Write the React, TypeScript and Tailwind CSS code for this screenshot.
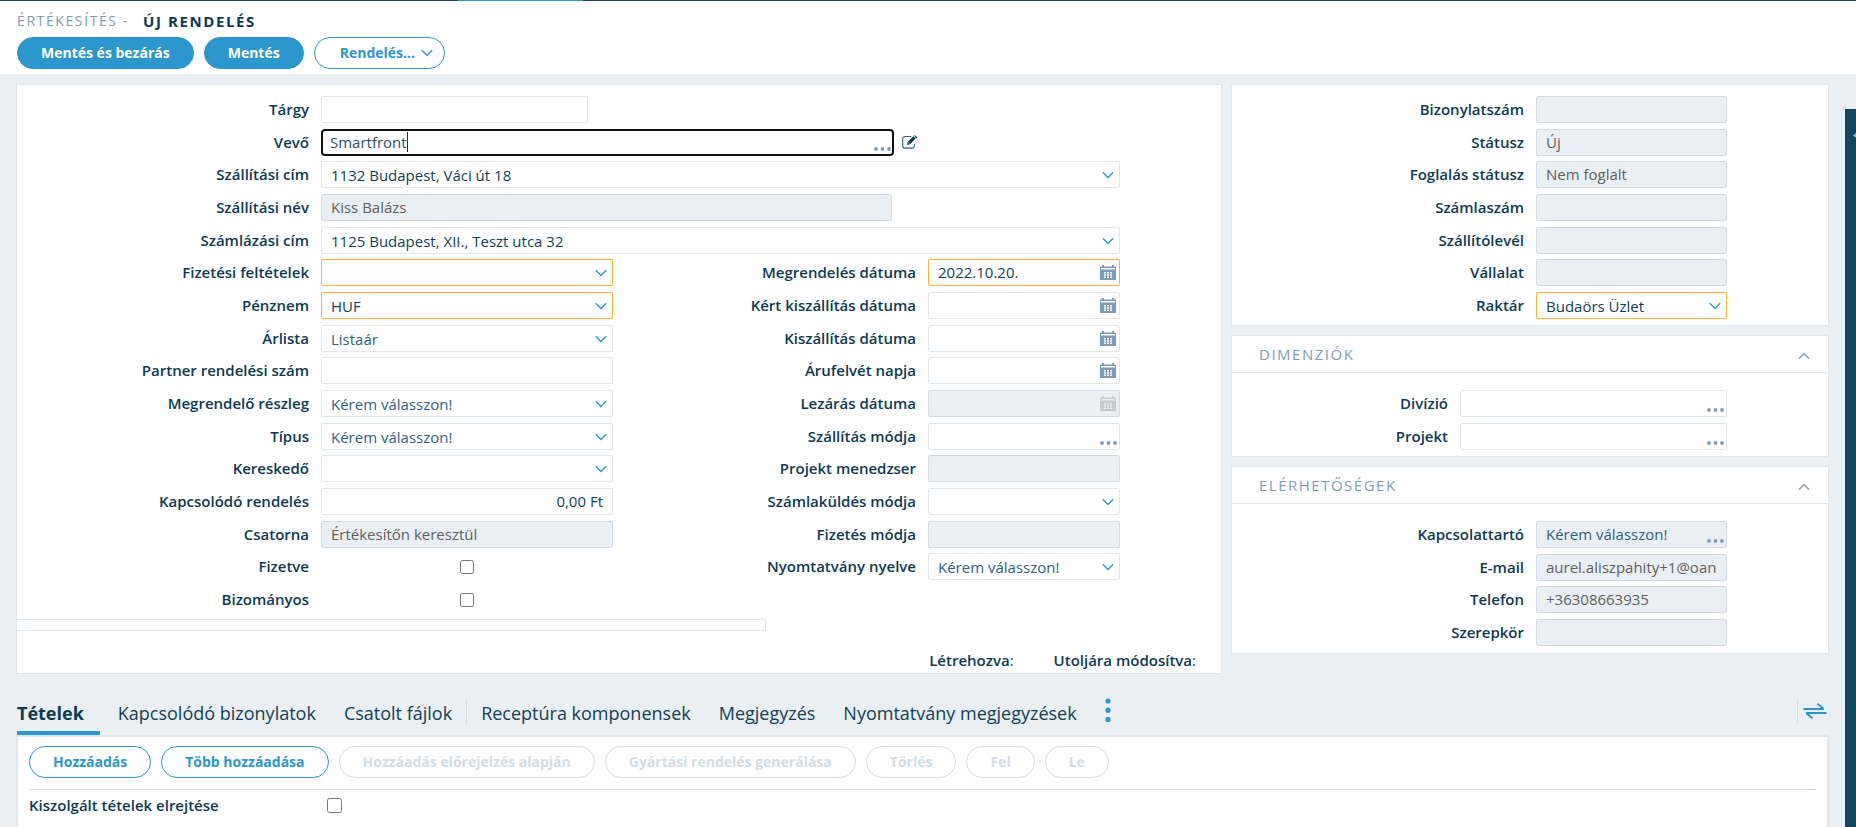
import { useId, type ReactNode } from "react";

const label = "self-start text-right text-[15px] leading-[27px] font-semibold whitespace-nowrap pr-3 text-[#0d3a52]";
const base = "block h-[27px] w-full min-w-0 text-[15px] leading-5 outline-none";

type Tone = "plain" | "required" | "locked" | "focus";
const boxes: Record<Tone, string> = {
  plain: "rounded-[2px] border px-[9px] border-[#e0e7ed] bg-white",
  required: "rounded-[2px] border px-[9px] border-[#fcb42c] bg-white",
  locked: "rounded-[2px] border px-[9px] border-[#d1dbe5] bg-[#eaeff3]",
  focus: "rounded-[4px] border-2 px-[7px] border-[#101010] bg-white",
};
const inks: Record<Tone, string> = {
  plain: "text-[#123f58]",
  required: "text-[#123f58]",
  locked: "text-[#5f6061]",
  focus: "text-[#2b4f66]",
};

function Chevron({ className = "" }: { className?: string }) {
  return (
    <svg viewBox="0 0 12 8" className={className} fill="none" stroke="currentColor" strokeWidth="1.4" aria-hidden="true">
      <path d="M.8 1.200 6 6.400 11.200 1.200" />
    </svg>
  );
}

function Dots() {
  return (
    <svg viewBox="0 0 17 4" className="pointer-events-none absolute right-[3px] bottom-[5px] h-1 w-[17px] fill-[#7f9bba]" aria-hidden="true">
      <circle cx="2" cy="2" r="1.9" />
      <circle cx="8.5" cy="2" r="1.9" />
      <circle cx="15" cy="2" r="1.9" />
    </svg>
  );
}

function Calendar({ muted }: { muted?: boolean }) {
  return (
    <svg
      viewBox="0 0 16 15"
      className={`pointer-events-none absolute top-[6px] right-1 h-[15px] w-4 ${muted ? "text-[#c3cbce]" : "text-[#7f9bba]"}`}
      aria-hidden="true"
    >
      <path
        fill="currentColor"
        fillRule="evenodd"
        d="M2 0h2v1.500h8V0h2v1.500h2V15H0V1.500h2zM1 3v1.500h14V3zM4 7v1.500h2V7zm3 0v1.500h2V7zm3 0v1.500h2V7zM4 9.300v1.500h2V9.300zm3 0v1.500h2V9.300zm3 0v1.500h2V9.300zM4 11.600v1.500h2v-1.500zm3 0v1.500h2v-1.500zm3 0v1.500h2v-1.500z"
      />
    </svg>
  );
}

type FieldProps = {
  name: string;
  kind?: "text" | "select" | "lookup" | "date" | "check";
  value?: string;
  tone?: Tone;
  hint?: boolean;
  end?: boolean;
  labelCol: string;
  fieldCol: string;
  children?: ReactNode;
};

function Field({ name, kind = "text", value = "", tone = "plain", hint, end, labelCol, fieldCol, children }: FieldProps) {
  const id = useId();
  const look = `${base} ${boxes[tone]} ${hint ? "text-[#2f6182]" : inks[tone]} ${end ? "text-right" : ""}`;
  return (
    <>
      <label htmlFor={id} className={`${label} ${labelCol}`}>
        {name}
      </label>
      {kind === "check" ? (
        <div className={`flex h-[27px] items-center justify-center ${fieldCol}`}>
          <input id={id} type="checkbox" className="size-[14px]" />
        </div>
      ) : (
        <div className={`relative self-start ${fieldCol}`}>
          {kind === "select" ? (
            <>
              <select id={id} defaultValue={value} className={`${look} appearance-none pt-px`}>
                <option value={value}>{value}</option>
              </select>
              <Chevron className="pointer-events-none absolute top-[10px] right-[6px] h-2 w-3 text-[#2c97cd]" />
            </>
          ) : (
            <input id={id} type="text" defaultValue={value} readOnly={tone === "locked"} className={`${look} pb-0.5`} />
          )}
          {kind === "lookup" && <Dots />}
          {kind === "date" && <Calendar muted={tone === "locked"} />}
          {children}
        </div>
      )}
    </>
  );
}

const wideL = { labelCol: "col-start-1", fieldCol: "col-start-2 col-span-2" };
const wideR = { labelCol: "col-start-4 col-span-2", fieldCol: "col-start-6" };
const side = { labelCol: "col-start-1 col-span-2", fieldCol: "col-start-3" };

const rows = "grid auto-rows-[33px_32px_33px]";
const sideGrid = `${rows} grid-cols-[228fr_76fr_191fr_101fr]`;
const card = "border border-[#dfe6ec] bg-white";

function Section({ title, children }: { title: string; children: ReactNode }) {
  return (
    <section className={card}>
      <header className="flex h-[37px] items-center justify-between border-b border-[#dfe6ec] pr-[18px] pl-[27px]">
        <h2 className="text-[15px] leading-5 tracking-widest text-[#7f9bba]">{title}</h2>
        <button type="button" aria-label={title} className="pt-1">
          <Chevron className="h-2 w-3 rotate-180 text-[#7f9bba]" />
        </button>
      </header>
      <div className={`${sideGrid} pt-[17px] pb-px`}>{children}</div>
    </section>
  );
}

function EditIcon() {
  return (
    <svg viewBox="0 0 16 14" className="h-[14px] w-4" aria-hidden="true">
      <path d="M9.500 1.500H3A2.300 2.300 0 0 0 .7 3.800v7A2.300 2.300 0 0 0 3 13.100h7.200a2.300 2.300 0 0 0 2.300-2.300V8.800" fill="none" stroke="#37617a" strokeWidth="1.100" />
      <path d="m5 9.900.7-3L11.300 1.300l2.300 2.300L8 9.200zM12 .7l.7-.6 2.700 2.300-1.100 1z" fill="#0d3a52" />
      <path d="m6.300 7.300 1.500 1.500" stroke="#fff" strokeWidth=".6" />
    </svg>
  );
}

const pill = "flex h-8 items-center rounded-2xl border text-[14px] leading-5 font-bold whitespace-nowrap";
const pillOn = "border-[#2c97cd] bg-white text-[#2c97cd]";

const actions = [
  ["Hozzáadás", true],
  ["Több hozzáadása", true],
  ["Hozzáadás előrejelzés alapján", false],
  ["Gyártási rendelés generálása", false],
  ["Törlés", false],
  ["Fel", false],
  ["Le", false],
] as const;

export default function App() {
  return (
    <div className="flex min-h-screen flex-col overflow-x-hidden bg-[#eaeff3] font-['Open_Sans','Noto_Sans',sans-serif] text-[#123f58]">
      <header className="bg-white pb-[5px]">
        <div className="flex h-px bg-[#14455e]">
          <div className="ml-[24.7%] w-[6.7%] bg-[#2c97cd]" />
        </div>
        <h1 className="flex gap-[14px] pt-[10px] pl-[17px] leading-5 tracking-widest">
          <span className="text-[14px] text-[#7f9bba]">ÉRTÉKESÍTÉS -</span>
          <span className="text-[15px] font-bold text-[#0d3a52]">ÚJ RENDELÉS</span>
        </h1>
        <div className="flex gap-[10px] pt-[6px] pl-[17px]">
          <button type="button" className={`${pill} border-[#2c97cd] bg-[#2c97cd] px-[23px] text-white`}>Mentés és bezárás</button>
          <button type="button" className={`${pill} border-[#2c97cd] bg-[#2c97cd] px-[23px] text-white`}>Mentés</button>
          <button type="button" className={`${pill} ${pillOn} gap-[6px] pr-[11px] pl-[25px]`}>
            Rendelés...
            <Chevron className="h-2 w-3" />
          </button>
        </div>
      </header>

      <div className="flex flex-1">
        <main className="flex min-w-0 flex-1 flex-col pt-[10px] pr-4 pl-4">
          <div className="grid grid-cols-[1206fr_598fr] items-start gap-[9px]">
            <form className={card}>
              <div className={`${rows} grid-cols-[304fr_267fr_25fr_279fr_36fr_192fr_101fr] pt-[11px]`}>
                <Field name="Tárgy" labelCol="col-start-1" fieldCol="col-start-2" />
                <Field name="Vevő" value="Smartfront" tone="focus" kind="lookup" labelCol="col-start-1" fieldCol="col-start-2 col-span-3 -mr-0.5">
                  <span className="absolute top-[3px] left-[86px] h-5 w-px bg-[#0d3a52]" />
                  <button type="button" aria-label="Vevő szerkesztése" className="absolute top-[6px] left-full ml-2">
                    <EditIcon />
                  </button>
                </Field>
                <Field name="Szállítási cím" kind="select" value="1132 Budapest, Váci út 18" labelCol="col-start-1" fieldCol="col-start-2 col-span-5" />
                <Field name="Szállítási név" value="Kiss Balázs" tone="locked" labelCol="col-start-1" fieldCol="col-start-2 col-span-3" />
                <Field name="Számlázási cím" kind="select" value="1125 Budapest, XII., Teszt utca 32" labelCol="col-start-1" fieldCol="col-start-2 col-span-5" />
                <Field {...wideL} name="Fizetési feltételek" kind="select" tone="required" />
                <Field {...wideR} name="Megrendelés dátuma" kind="date" value="2022.10.20." tone="required" />
                <Field {...wideL} name="Pénznem" kind="select" value="HUF" tone="required" />
                <Field {...wideR} name="Kért kiszállítás dátuma" kind="date" />
                <Field {...wideL} name="Árlista" kind="select" value="Listaár" hint />
                <Field {...wideR} name="Kiszállítás dátuma" kind="date" />
                <Field {...wideL} name="Partner rendelési szám" />
                <Field {...wideR} name="Árufelvét napja" kind="date" />
                <Field {...wideL} name="Megrendelő részleg" kind="select" value="Kérem válasszon!" hint />
                <Field {...wideR} name="Lezárás dátuma" kind="date" tone="locked" />
                <Field {...wideL} name="Típus" kind="select" value="Kérem válasszon!" hint />
                <Field {...wideR} name="Szállítás módja" kind="lookup" />
                <Field {...wideL} name="Kereskedő" kind="select" />
                <Field {...wideR} name="Projekt menedzser" tone="locked" />
                <Field {...wideL} name="Kapcsolódó rendelés" value="0,00 Ft" end />
                <Field {...wideR} name="Számlaküldés módja" kind="select" />
                <Field {...wideL} name="Csatorna" value="Értékesítőn keresztül" tone="locked" />
                <Field {...wideR} name="Fizetés módja" tone="locked" />
                <Field {...wideL} name="Fizetve" kind="check" />
                <Field {...wideR} name="Nyomtatvány nyelve" kind="select" value="Kérem válasszon!" hint />
                <Field {...wideL} name="Bizományos" kind="check" />
              </div>
              <div className="h-3 w-[62.2%] border border-l-0 border-[#dfe6ec]" />
              <div className="flex justify-end gap-10 pt-[19px] pr-[25px] pb-[3px] text-[15px] leading-5">
                <p><b className="font-semibold text-[#0d3a52]">Létrehozva</b>:</p>
                <p><b className="font-semibold text-[#0d3a52]">Utoljára módosítva</b>:</p>
              </div>
            </form>

            <div className="flex flex-col gap-[9px]">
              <section className={card}>
                <div className={`${sideGrid} pt-[11px]`}>
                  <Field {...side} name="Bizonylatszám" tone="locked" />
                  <Field {...side} name="Státusz" value="Új" tone="locked" />
                  <Field {...side} name="Foglalás státusz" value="Nem foglalt" tone="locked" />
                  <Field {...side} name="Számlaszám" tone="locked" />
                  <Field {...side} name="Szállítólevél" tone="locked" />
                  <Field {...side} name="Vállalat" tone="locked" />
                  <Field {...side} name="Raktár" kind="select" value="Budaörs Üzlet" tone="required" />
                </div>
              </section>
              <Section title="DIMENZIÓK">
                <Field name="Divízió" kind="lookup" labelCol="col-start-1" fieldCol="col-start-2 col-span-2" />
                <Field name="Projekt" kind="lookup" labelCol="col-start-1" fieldCol="col-start-2 col-span-2" />
              </Section>
              <Section title="ELÉRHETŐSÉGEK">
                <Field {...side} name="Kapcsolattartó" kind="lookup" value="Kérem válasszon!" tone="locked" hint />
                <Field {...side} name="E-mail" value="aurel.aliszpahity+1@oand" tone="locked" />
                <Field {...side} name="Telefon" value="+36308663935" tone="locked" />
                <Field {...side} name="Szerepkör" tone="locked" />
              </Section>
            </div>
          </div>

          <nav className="flex items-end gap-7 pt-6 pl-px text-[18px] leading-6 whitespace-nowrap">
            <a href="#tetelek" className="-mr-[10px] border-b-4 border-[#2c97cd] pr-4 pb-[6px] font-bold text-[#0d3a52]">Tételek</a>
            <a href="#bizonylatok" className="pb-[10px]">Kapcsolódó bizonylatok</a>
            <a href="#fajlok" className="pb-[10px]">Csatolt fájlok</a>
            <span className="-mx-[14px] mb-[10px] h-[25px] w-px bg-[#d1dbe5]" />
            <a href="#receptura" className="pb-[10px]">Receptúra komponensek</a>
            <a href="#megjegyzes" className="pb-[10px]">Megjegyzés</a>
            <a href="#nyomtatvany" className="pb-[10px]">Nyomtatvány megjegyzések</a>
            <button type="button" aria-label="További lapok" className="pb-[13px]">
              <svg viewBox="0 0 6 24" className="h-6 w-[6px] fill-[#2c97cd]" aria-hidden="true">
                <circle cx="3" cy="3" r="2.600" />
                <circle cx="3" cy="12.200" r="2.600" />
                <circle cx="3" cy="21.400" r="2.600" />
              </svg>
            </button>
            <button type="button" aria-label="Elrendezés váltása" className="mr-[2px] mb-[12px] ml-auto flex h-6 items-center border-l border-[#d1dbe5] pl-[5px]">
              <svg viewBox="0 0 24 16" className="h-4 w-6 fill-none stroke-[#2c97cd] stroke-2" aria-hidden="true">
                <path d="M.5 6H21M14.500.8 20.800 6M23.500 10H3M9.500 15.200 3.200 10" />
              </svg>
            </button>
          </nav>

          <section className="flex-1 border-2 border-b-0 border-[#dfe6ec] bg-white px-[11px] pt-[9px]">
            <div className="flex gap-[10px] pb-[11px]">
              {actions.map(([text, on]) => (
                <button key={text} type="button" disabled={!on} className={`${pill} px-[23px] ${on ? pillOn : "border-[#d3dde6] text-[#d3dde6]"}`}>
                  {text}
                </button>
              ))}
            </div>
            <div className="flex items-center gap-[108px] border-t border-[#d1dbe5] pt-[5px]">
              <label htmlFor="hide-served" className="text-[15px] leading-5 font-semibold text-[#0d3a52]">Kiszolgált tételek elrejtése</label>
              <input id="hide-served" type="checkbox" className="size-[15px]" />
            </div>
          </section>
        </main>
        <aside className="mt-[35px] w-[11px] shrink-0 overflow-hidden bg-[#14455e]">
          <svg viewBox="0 0 11 40" className="h-10 w-full fill-none stroke-[#6cbce5] stroke-2" aria-hidden="true">
            <path d="M14 23.500 9.500 26.500 14 29.500" />
          </svg>
        </aside>
      </div>
    </div>
  );
}
